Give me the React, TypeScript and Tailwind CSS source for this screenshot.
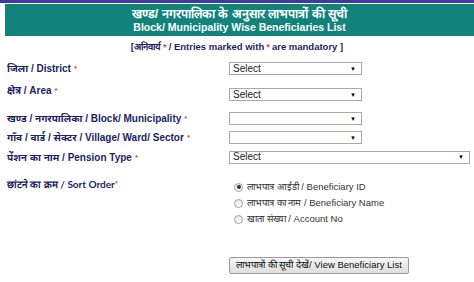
import React from 'react';

const labelCls = "text-[10px] font-bold text-[#1c1f5e] leading-[13px] font-['Liberation_Sans',Arial,'Noto_Sans',sans-serif]";

function Star() {
  return <span className="text-[#e04848] text-[8px] align-top ml-[3px]">*</span>;
}

function FakeSelect({ text, width }: { text?: string; width: string }) {
  return (
    <div
      className={`${width} h-[13px] border border-[#a9a9a9] bg-white flex items-center justify-between pl-[3px] pr-[5px] text-[10px] text-[#222] font-['Liberation_Sans',Arial,sans-serif]`}
    >
      <span className="leading-none">{text ?? ''}</span>
      <span className="text-[6px] leading-none text-black">▼</span>
    </div>
  );
}

function Radio({ checked, label }: { checked?: boolean; label: string }) {
  return (
    <div className="h-[16px] flex items-center">
      <div className="w-[9px] h-[9px] ml-[5px] rounded-full border border-[#a0a0a0] bg-gradient-to-b from-[#e8e8e8] to-white flex items-center justify-center">
        {checked && <div className="w-[4px] h-[4px] rounded-full bg-[#333]" />}
      </div>
      <span className="ml-[4px] text-[9.5px] text-[#333] whitespace-nowrap font-['Liberation_Sans',Arial,sans-serif]">{label}</span>
    </div>
  );
}

export default function App() {
  return (
    <div className="w-[474px] h-[282px] bg-white overflow-hidden font-['Liberation_Sans',Arial,sans-serif]">
      <div className="h-[3px] bg-[#3b3aa3]" />
      <div className="mt-[1px] ml-[5px] h-[32px] bg-[#11837a] flex flex-col items-center justify-center text-white font-bold">
        <div className="text-[12.5px] leading-[14px]">खण्ड/ नगरपालिका के अनुसार लाभपात्रों की सूची</div>
        <div className="text-[10.5px] leading-[12px]">Block/ Municipality Wise Beneficiaries List</div>
      </div>

      <div className="h-[18px] mt-[2px] flex items-center justify-center text-[9.5px] font-bold text-[#1c1f5e]">
        [अनिवार्य <span className="text-[#e04848] mx-[2px]">*</span> / Entries marked with <span className="text-[#e04848] mx-[2px]">*</span> are mandatory ]
      </div>

      <div className="mt-[6px] flex items-center h-[13px]">
        <div className={`w-[229px] pl-[7px] ${labelCls}`}>जिला / District<Star /></div>
        <FakeSelect text="Select" width="w-[133px]" />
      </div>

      <div className="mt-[13px] flex items-center h-[13px]">
        <div className={`w-[229px] pl-[7px] mb-[8px] ${labelCls}`}>क्षेत्र / Area<Star /></div>
        <FakeSelect text="Select" width="w-[133px]" />
      </div>

      <div className="mt-[11px] flex items-center h-[13px]">
        <div className={`w-[229px] pl-[7px] ${labelCls}`}>खण्ड / नगरपालिका / Block/ Municipality<Star /></div>
        <FakeSelect width="w-[133px]" />
      </div>

      <div className="mt-[6px] flex items-center h-[13px]">
        <div className={`w-[229px] pl-[7px] ${labelCls}`}>गाँव / वार्ड / सेक्टर / Village/ Ward/ Sector<Star /></div>
        <FakeSelect width="w-[133px]" />
      </div>

      <div className="mt-[7px] flex items-center h-[12px]">
        <div className={`w-[229px] pl-[7px] ${labelCls}`}>पेंशन का नाम / Pension Type<Star /></div>
        <FakeSelect text="Select" width="w-[241px]" />
      </div>

      <div className="mt-[15px] flex items-start">
        <div className={`w-[229px] pl-[7px] text-[10px] font-bold text-[#1c1f5e] leading-[12px] font-['Lato','Open_Sans',sans-serif]`}>
          छांटने का क्रम / Sort Order<span className="text-[#e04848] text-[8px] align-top">*</span>
        </div>
        <div className="mt-[1px] flex flex-col">
          <Radio checked label="लाभपात्र आईडी / Beneficiary ID" />
          <Radio label="लाभपात्र का नाम / Beneficiary Name" />
          <Radio label="खाता संख्या / Account No" />
        </div>
      </div>

      <div className="mt-[30px] pl-[229px]">
        <div className="w-[180px] h-[17px] border border-[#9a9a9a] rounded-[2px] bg-gradient-to-b from-[#f6f6f6] to-[#dedede] flex items-center justify-center text-[9.5px] text-[#111] whitespace-nowrap">
          लाभपात्रों की सूची देखें/ View Beneficiary List
        </div>
      </div>
    </div>
  );
}
